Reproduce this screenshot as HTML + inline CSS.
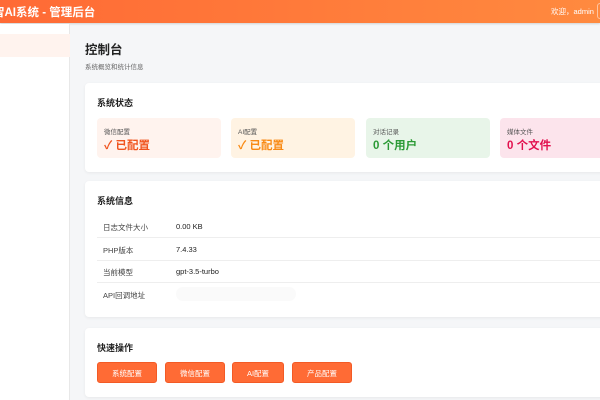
<!DOCTYPE html>
<html><head><meta charset="utf-8"><style>
*{margin:0;padding:0;box-sizing:border-box}
body{width:600px;height:400px;overflow:hidden;background:#f5f6f8;font-family:"Liberation Sans","Noto Sans CJK SC",sans-serif;position:relative}
.hdr{position:absolute;left:0;top:0;width:600px;height:23px;background:linear-gradient(90deg,#ff6a35,#ff8a3f);box-shadow:0 1px 2px rgba(0,0,0,.15)}
.hdr .t{position:absolute;left:-7px;top:4px;color:#fff;font-size:11.5px;font-weight:bold;white-space:nowrap}
.hdr .w{position:absolute;left:551px;top:6px;color:#fff;font-size:7.5px}
.hdr .b{position:absolute;left:597px;top:3px;width:10px;height:16px;border:1px solid rgba(255,255,255,.5);border-radius:3px}
.side{position:absolute;left:0;top:24px;width:70px;height:376px;background:#fff;border-right:1px solid #e8e8e8}
.side .a{position:absolute;top:10px;left:0;width:70px;height:23px;background:#fff3ee}
h1{position:absolute;left:85px;top:39px;font-size:12.5px;font-weight:bold;color:#222}
.sub{position:absolute;left:85px;top:61px;font-size:6.5px;color:#666}
.card{position:absolute;left:85px;width:530px;background:#fff;border-radius:4px;box-shadow:0 1px 3px rgba(0,0,0,.06)}
.ct{position:absolute;left:12px;font-size:9px;font-weight:bold;color:#222}
.st{position:absolute;top:35px;width:124px;height:40px;border-radius:4px}
.st .l{position:absolute;left:7px;top:8px;font-size:6.5px;color:#555}
.st .v{position:absolute;left:7px;top:19px;font-size:11.5px;font-weight:bold}
.row{position:absolute;left:12px;width:520px;height:22px;border-bottom:1px solid #eee;font-size:7.5px;color:#444}
.row span{position:absolute;top:6px}
.btn{position:absolute;top:34px;height:21px;background:#ff6b35;border-radius:3px;color:#fff;font-size:7.5px;text-align:center;line-height:21px;border:1px solid #f35a25}
</style></head><body>
<div class="hdr"><div class="t">智AI系统 - 管理后台</div><div class="w">欢迎，admin</div><div class="b"></div></div>
<div class="side"><div class="a"></div></div>
<h1>控制台</h1>
<div class="sub">系统概览和统计信息</div>
<div class="card" style="top:83px;height:89px">
<div class="ct" style="top:13px">系统状态</div>
<div class="st" style="left:12px;background:#fff3ee"><div class="l">微信配置</div><div class="v" style="color:#f0541e">✓ 已配置</div></div>
<div class="st" style="left:146px;background:#fff3e3"><div class="l">AI配置</div><div class="v" style="color:#f98a14">✓ 已配置</div></div>
<div class="st" style="left:281px;background:#e8f5e9"><div class="l">对话记录</div><div class="v" style="color:#2b9a35">0 个用户</div></div>
<div class="st" style="left:415px;background:#fce4ec"><div class="l">媒体文件</div><div class="v" style="color:#e2104e">0 个文件</div></div>
</div>
<div class="card" style="top:181px;height:136px">
<div class="ct" style="top:13px;left:12px">系统信息</div>
<div class="row" style="top:35px"><span style="left:6px">日志文件大小</span><span style="left:79px;color:#222">0.00 KB</span></div>
<div class="row" style="top:58px"><span style="left:6px">PHP版本</span><span style="left:79px;color:#222">7.4.33</span></div>
<div class="row" style="top:80px"><span style="left:6px">当前模型</span><span style="left:79px;color:#222">gpt-3.5-turbo</span></div>
<div class="row" style="top:103px;border:none"><span style="left:6px">API回调地址</span><span style="left:79px;top:3px;width:120px;height:14px;background:#fafafa;border-radius:7px"></span></div>
</div>
<div class="card" style="top:328px;height:69px">
<div class="ct" style="top:13px">快速操作</div>
<div class="btn" style="left:12px;width:60px">系统配置</div>
<div class="btn" style="left:80px;width:60px">微信配置</div>
<div class="btn" style="left:147px;width:52px">AI配置</div>
<div class="btn" style="left:207px;width:60px">产品配置</div>
</div>
</body></html>
